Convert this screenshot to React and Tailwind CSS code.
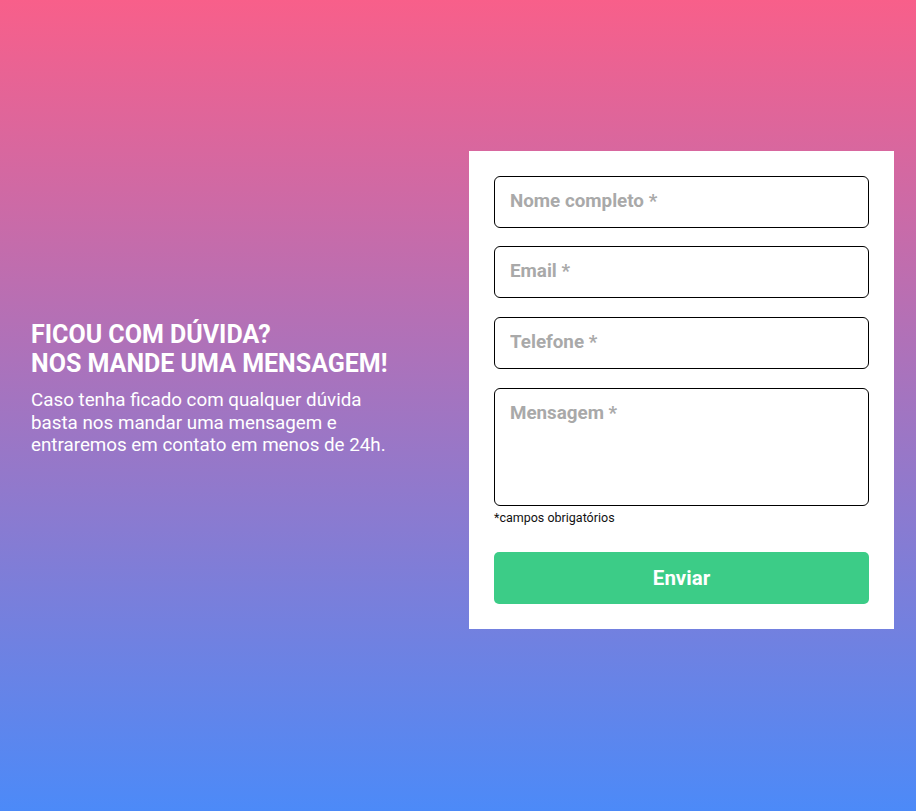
export default function App() {
  return (
    <div
      className="w-full h-[811px] bg-linear-to-b/srgb from-[#f85f8a] to-[#4c8af8] flex items-start justify-between pt-[151px] pl-[31px] pr-[22px]"
      style={{ fontFamily: "Roboto, 'Noto Sans', sans-serif" }}
    >
      <div className="self-start mt-[169px] text-white">
        <h2 className="text-[25px] leading-[29px] font-bold">
          FICOU COM DÚVIDA?
          <br />
          NOS MANDE UMA MENSAGEM!
        </h2>
        <p className="mt-[11px] text-[18.8px] leading-[22.6px]">
          Caso tenha ficado com qualquer dúvida
          <br />
          basta nos mandar uma mensagem e
          <br />
          entraremos em contato em menos de 24h.
        </p>
      </div>
      <form className="w-[425px] bg-white p-[25px] flex flex-col">
        <input
          className="h-[52px] w-full border border-black rounded-[6px] px-[15px] pb-[3px] text-[18.8px] font-bold text-gray-700 placeholder:text-[#a9a9a9] outline-none"
          placeholder="Nome completo *"
        />
        <input
          className="mt-[18px] h-[52px] w-full border border-black rounded-[6px] px-[15px] pb-[3px] text-[18.8px] font-bold text-gray-700 placeholder:text-[#a9a9a9] outline-none"
          placeholder="Email *"
        />
        <input
          className="mt-[19px] h-[52px] w-full border border-black rounded-[6px] px-[15px] pb-[3px] text-[18.8px] font-bold text-gray-700 placeholder:text-[#a9a9a9] outline-none"
          placeholder="Telefone *"
        />
        <textarea
          className="mt-[19px] h-[118px] w-full border border-black rounded-[6px] px-[15px] py-[10px] text-[18.8px] font-bold text-gray-700 placeholder:text-[#a9a9a9] outline-none resize-none"
          placeholder="Mensagem *"
        />
        <p className="mt-[4px] text-[12.5px] leading-[16px] text-[#111]">*campos obrigatórios</p>
        <button
          type="button"
          className="mt-[26px] h-[52px] w-full rounded-[5px] bg-[#3ccc87] text-white text-[20.5px] font-bold"
        >
          Enviar
        </button>
      </form>
    </div>
  );
}
